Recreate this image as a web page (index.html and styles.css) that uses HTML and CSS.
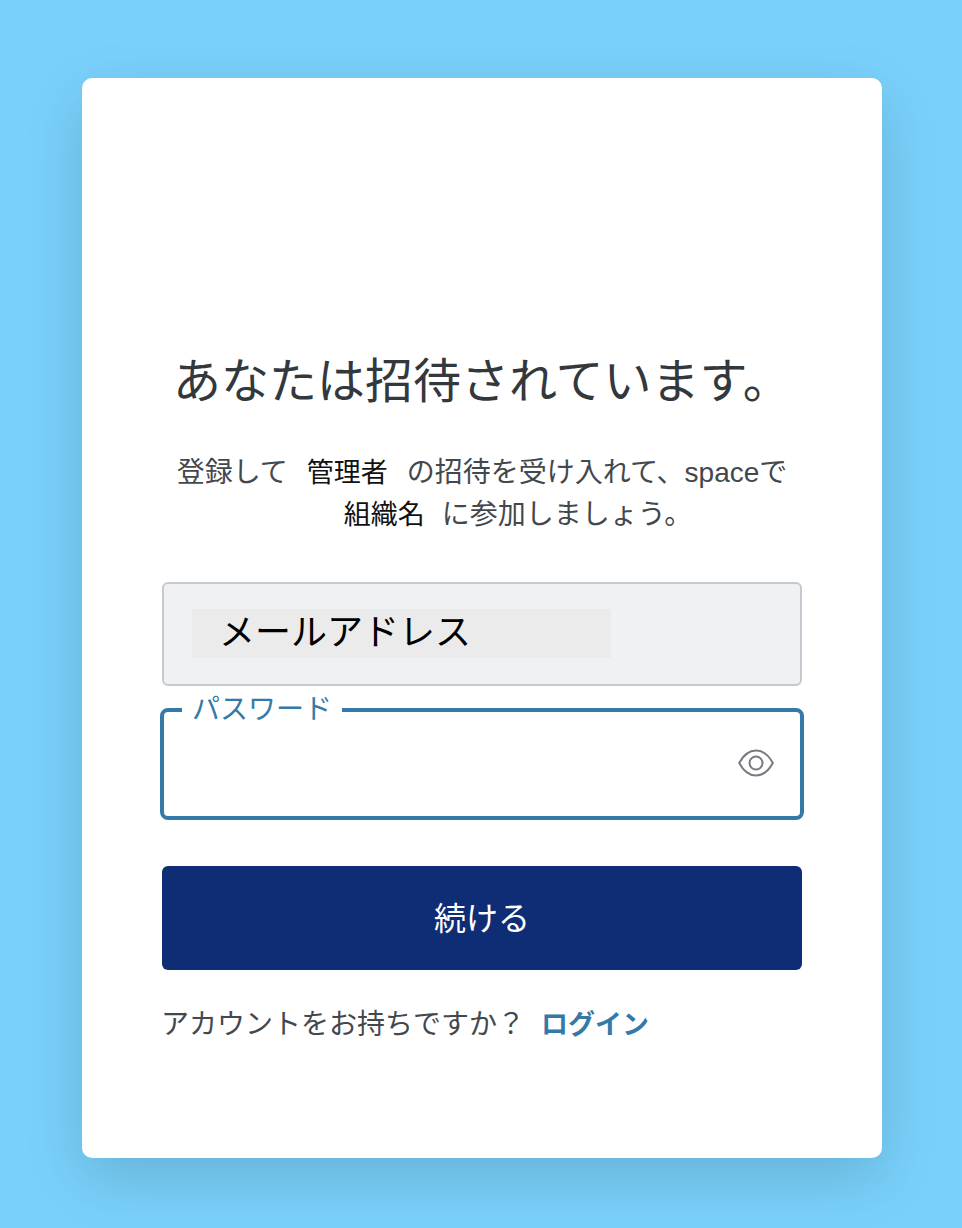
FILE: index.html
```html
<!DOCTYPE html>
<html lang="ja">
<head>
    <meta charset="UTF-8">
    <meta name="viewport" content="width=device-width, initial-scale=1.0">
    <title>招待</title>
    <link rel="stylesheet" href="styles.css">
</head>
<body>
    <div class="card">
        <h1 class="title">あなたは招待されています。</h1>
        <p class="intro">登録して<strong class="name">管理者</strong>の招待を受け入れて、spaceで<br><strong class="name name-org">組織名</strong>に参加しましょう。</p>

        <form class="form">
            <div class="field field-email">
                <span class="email-value">メールアドレス</span>
            </div>

            <fieldset class="field-password">
                <legend class="password-label">パスワード</legend>
                <svg class="eye" viewBox="0 0 36 28" width="36" height="28" fill="none" stroke="#777b80" stroke-width="2">
                    <path d="M1.2 14C5.500 6 11 1.500 18 1.500S30.500 6 34.800 14C30.500 22 25 26.500 18 26.500S5.500 22 1.200 14z"/>
                    <circle cx="18" cy="14" r="6.500"/>
                </svg>
            </fieldset>

            <button type="button" class="submit-btn">続ける</button>
        </form>

        <p class="login-row">アカウントをお持ちですか？<a class="login-link">ログイン</a></p>
    </div>
</body>
</html>
```

FILE: styles.css
```css
* {
    margin: 0;
    padding: 0;
    box-sizing: border-box;
}

body {
    height: 1228px;
    overflow: hidden;
    padding: 78px 80px 70px 82px;
    background-color: #79d1fb;
    font-family: "Liberation Sans", "Noto Sans CJK JP", sans-serif;
}

.card {
    height: 1080px;
    padding: 275px 80px 0;
    background: #ffffff;
    border-radius: 10px;
    box-shadow: 0 20px 60px rgba(0, 0, 0, 0.15);
}

.title {
    padding-left: 11px;
    font-size: 48px;
    line-height: 58px;
    font-weight: 400;
    color: #33383d;
    white-space: nowrap;
}

.intro {
    margin-top: 41px;
    font-size: 28px;
    line-height: 41px;
    color: #43484e;
    text-align: center;
    white-space: nowrap;
}

.name {
    margin: 0 19px;
    font-size: 27px;
    font-weight: 400;
    color: #111111;
}

.name-org {
    margin: 0 17px 0 72px;
}

.form {
    margin-top: 46px;
}

.field-email {
    height: 104px;
    padding: 25px 28px;
    background: #f0f1f3;
    border: 2px solid #c6c9cf;
    border-radius: 6px;
}

.email-value {
    display: block;
    width: 419px;
    height: 49px;
    padding-left: 27px;
    background: #ebebeb;
    font-size: 36px;
    line-height: 47px;
    color: #000000;
}

.field-password {
    position: relative;
    height: 125px;
    margin: 9px -2px 0;
    padding: 0 18px;
    border: 4px solid #3579a8;
    border-radius: 8px;
}

.password-label {
    padding: 0 10px;
    font-size: 28px;
    line-height: 30px;
    color: #3579a8;
}

.eye {
    position: absolute;
    top: 24px;
    right: 26px;
}

.submit-btn {
    display: block;
    width: 640px;
    height: 104px;
    margin-top: 46px;
    padding-bottom: 4px;
    background: #0f2d75;
    border: none;
    border-radius: 6px;
    font-family: inherit;
    font-size: 32px;
    color: #ffffff;
}

.login-row {
    margin-top: 34px;
    margin-left: -1px;
    font-size: 28px;
    line-height: 42px;
    color: #43484e;
}

.login-link {
    margin-left: 16px;
    font-size: 27px;
    font-weight: 700;
    color: #3579a8;
}
```
